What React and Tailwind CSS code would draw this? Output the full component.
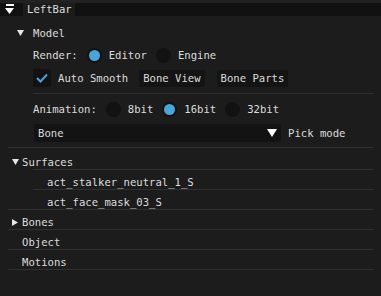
import React from 'react';

const font = { fontFamily: '"DejaVu Sans Mono", "Liberation Mono", monospace' };

function Radio({ on }) {
  return (
    <span className="w-[15px] h-[15px] rounded-full bg-[#121212] flex items-center justify-center shrink-0">
      {on && <span className="w-[11px] h-[11px] rounded-full bg-[#4ba3dc]" />}
    </span>
  );
}

function Tri({ down }) {
  return down ? (
    <svg width="7" height="6" viewBox="0 0 7 6" className="shrink-0">
      <path d="M0 0 L7 0 L3.5 6 Z" fill="#e6e6e6" />
    </svg>
  ) : (
    <svg width="6" height="7" viewBox="0 0 6 7" className="shrink-0">
      <path d="M0 0 L6 3.5 L0 7 Z" fill="#e6e6e6" />
    </svg>
  );
}

function Row({ indent, children, line = 8 }) {
  return (
    <div className="relative h-[20px] flex items-center pt-[2px]" style={{ paddingLeft: indent }}>
      {children}
      <div className="absolute bottom-[1px] right-[7px] h-px bg-[#2f2f2f]" style={{ left: line }} />
    </div>
  );
}

export default function App() {
  return (
    <div className="w-[381px] h-[296px] bg-[#1c1c1c] text-[#dcdcdc] text-[10.6px] leading-none overflow-hidden" style={font}>
      <div className="h-[3px] bg-[#222222]" />
      <div className="h-[13px] bg-[#111111] flex">
        <div className="w-[23px] flex flex-col items-center pt-[1px] pr-[4px]">
          <div className="w-[8px] h-[1.5px] bg-white" />
          <svg width="9" height="6" viewBox="0 0 9 6" className="mt-[2px]">
            <path d="M0 0 L9 0 L4.5 6 Z" fill="#ffffff" />
          </svg>
        </div>
        <div className="w-[52px] bg-[#1c1c1c] flex items-center pl-[4px]">LeftBar</div>
      </div>

      <div className="mt-[8px] h-[18px] flex items-center pl-[17px] gap-[9px]">
        <Tri down />
        <span>Model</span>
      </div>

      <div className="mt-[4px] h-[18px] flex items-center pl-[33px]">
        <span>Render:</span>
        <span className="ml-[9px]"><Radio on /></span>
        <span className="ml-[7px]">Editor</span>
        <span className="ml-[9px]"><Radio /></span>
        <span className="ml-[7px]">Engine</span>
      </div>

      <div className="mt-[5px] h-[18px] flex items-center pl-[33px]">
        <span className="w-[18px] h-[18px] rounded-[2px] bg-[#121212] flex items-center justify-center">
          <svg width="12" height="10" viewBox="0 0 12 10">
            <path d="M1 5 L4.5 8.5 L11 1.5" stroke="#4ba3dc" strokeWidth="2" fill="none" />
          </svg>
        </span>
        <span className="ml-[7px]">Auto Smooth</span>
        <span className="ml-[11px] h-[17px] px-[4px] flex items-center rounded-[2px] bg-[#141414]">Bone View</span>
        <span className="ml-[12px] h-[17px] px-[4px] flex items-center rounded-[2px] bg-[#141414]">Bone Parts</span>
      </div>

      <div className="mt-[6px] ml-[33px] mr-[7px] h-px bg-[#2f2f2f]" />

      <div className="mt-[6px] h-[18px] flex items-center pl-[33px]">
        <span>Animation:</span>
        <span className="ml-[9px]"><Radio /></span>
        <span className="ml-[7px]">8bit</span>
        <span className="ml-[9px]"><Radio on /></span>
        <span className="ml-[7px]">16bit</span>
        <span className="ml-[9px]"><Radio /></span>
        <span className="ml-[7px]">32bit</span>
      </div>

      <div className="mt-[6px] h-[18px] flex items-center pl-[34px]">
        <div className="w-[247px] h-[18px] rounded-[2px] bg-[#131313] flex items-center pl-[4px] pr-[4px] justify-between">
          <span>Bone</span>
          <svg width="10" height="8" viewBox="0 0 10 8">
            <path d="M0 0 L10 0 L5 8 Z" fill="#ffffff" />
          </svg>
        </div>
        <span className="ml-[7px]">Pick mode</span>
      </div>

      <div className="mt-[5px] ml-[8px] mr-[7px] h-px bg-[#2f2f2f]" />

      <div className="mt-[3px]">
        <Row indent={12} line={33}>
          <Tri down />
          <span className="ml-[3px]">Surfaces</span>
        </Row>
        <Row indent={47} line={33}>act_stalker_neutral_1_S</Row>
        <Row indent={47}>act_face_mask_03_S</Row>
        <Row indent={12}>
          <Tri />
          <span className="ml-[4px]">Bones</span>
        </Row>
        <Row indent={22}>Object</Row>
        <Row indent={22}>Motions</Row>
      </div>
    </div>
  );
}
